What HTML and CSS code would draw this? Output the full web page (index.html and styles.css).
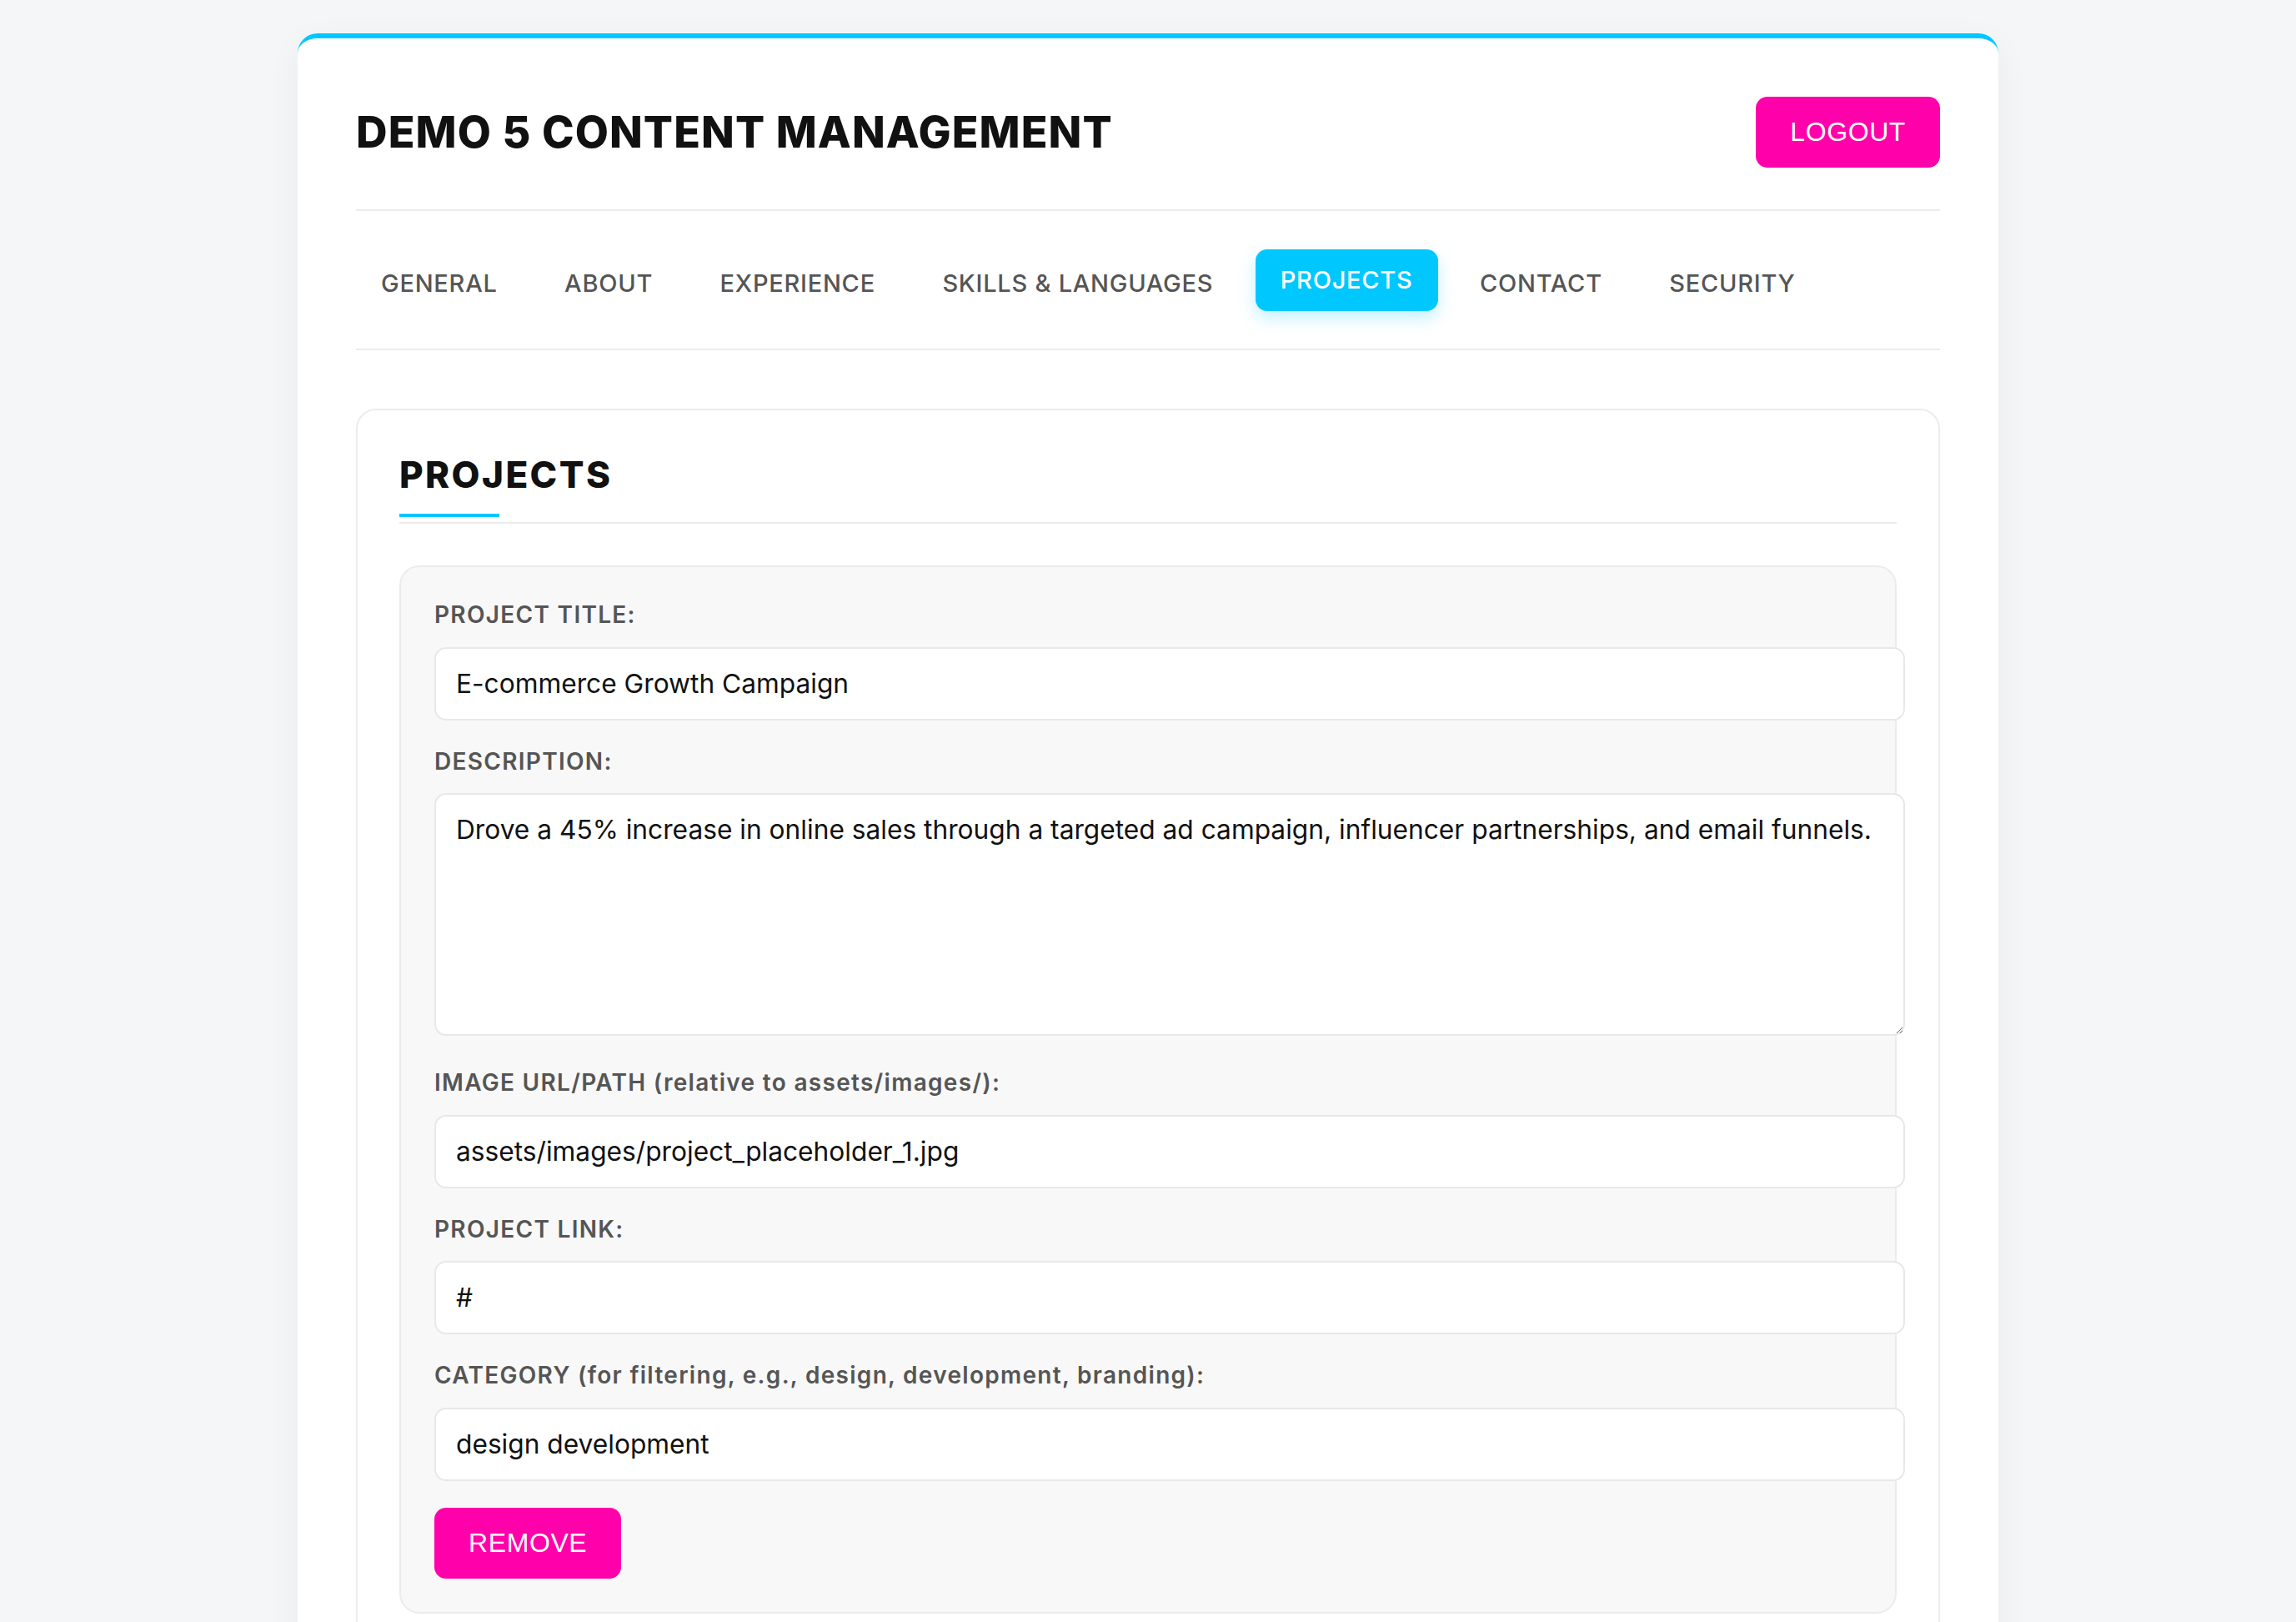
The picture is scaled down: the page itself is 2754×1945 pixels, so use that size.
FILE: index.html
```html
<!DOCTYPE html>
<html lang="en">
<head>
    <meta charset="UTF-8">
    <meta name="viewport" content="width=device-width, initial-scale=1.0">
    <title>Demo 5 Content Management</title>
    <link rel="stylesheet" href="styles.css">
</head>
<body>
    <div class="container">
        <div class="header">
            <h1>DEMO 5 CONTENT MANAGEMENT</h1>
            <button class="btn btn-pink">LOGOUT</button>
        </div>

        <nav class="tabs">
            <a href="#" class="tab">GENERAL</a>
            <a href="#" class="tab">ABOUT</a>
            <a href="#" class="tab">EXPERIENCE</a>
            <a href="#" class="tab">SKILLS &amp; LANGUAGES</a>
            <a href="#" class="tab active">PROJECTS</a>
            <a href="#" class="tab">CONTACT</a>
            <a href="#" class="tab">SECURITY</a>
        </nav>

        <div class="section">
            <h2>PROJECTS</h2>

            <div class="item">
                <label>PROJECT TITLE:</label>
                <input type="text" value="E-commerce Growth Campaign">

                <label>DESCRIPTION:</label>
                <textarea>Drove a 45% increase in online sales through a targeted ad campaign, influencer partnerships, and email funnels.</textarea>

                <label>IMAGE URL/PATH (relative to assets/images/):</label>
                <input type="text" value="assets/images/project_placeholder_1.jpg">

                <label>PROJECT LINK:</label>
                <input type="text" value="#">

                <label>CATEGORY (for filtering, e.g., design, development, branding):</label>
                <input type="text" value="design development">

                <button class="btn btn-pink">REMOVE</button>
            </div>

            <button class="btn btn-cyan">ADD PROJECT</button>
        </div>
    </div>
</body>
</html>
```

FILE: styles.css
```css
body {
    font-family: Inter, "Noto Sans", Arial, sans-serif;
    margin: 0;
    padding: 40px 0;
    background-color: #f5f6f8;
    color: #111;
}
.container {
    max-width: 1900px;
    margin: 0 auto;
    background-color: white;
    padding: 70px;
    border-top: 6px solid #00c8ff;
    border-radius: 24px;
    box-shadow: 0 10px 40px rgba(0,0,0,0.05);
}
.header {
    display: flex;
    justify-content: space-between;
    align-items: center;
    padding-bottom: 50px;
    border-bottom: 2px solid #ececec;
}
h1 {
    margin: 0;
    font-size: 52px;
    font-weight: 800;
    letter-spacing: 1.1px;
    color: #111;
}
.btn {
    font-family: "Liberation Sans", Arial, sans-serif;
    font-size: 32px;
    letter-spacing: 0.6px;
    line-height: 37px;
    padding: 24px 41px;
    border: none;
    border-radius: 14px;
    color: white;
    cursor: pointer;
}
.btn-pink {
    background-color: #ff00aa;
}
.btn-cyan {
    background-color: #00c8ff;
    margin-top: 40px;
}
.tabs {
    display: flex;
    gap: 20.5px;
    padding: 50px 0 41px;
    border-bottom: 2px solid #ececec;
}
.tab {
    font-size: 29px;
    font-weight: 500;
    letter-spacing: 0.75px;
    line-height: 36px;
    padding: 19px 30px;
    color: #555;
    text-decoration: none;
    border-radius: 14px;
}
.tab.active {
    background-color: #00c8ff;
    color: white;
    transform: translateY(-4px);
    box-shadow: 0 8px 20px rgba(0,200,255,0.25);
}
.section {
    margin-top: 70px;
    padding: 50px;
    border: 2px solid #ececec;
    border-radius: 24px;
}
h2 {
    position: relative;
    margin: 0 0 50px;
    padding-bottom: 30px;
    font-size: 44px;
    font-weight: 800;
    letter-spacing: 2.4px;
    border-bottom: 2px solid #ececec;
}
h2::after {
    content: "";
    position: absolute;
    left: 0;
    bottom: 6px;
    width: 120px;
    height: 4px;
    background-color: #00c8ff;
}
.item {
    padding: 40px;
    background-color: #f8f8f8;
    border: 2px solid #ececec;
    border-radius: 24px;
}
label {
    display: block;
    margin-bottom: 21.5px;
    font-size: 28px;
    font-weight: 600;
    letter-spacing: 1.3px;
    color: #555;
}
input, textarea {
    display: block;
    width: 100%;
    margin: 0 0 32px;
    padding: 22px 24px;
    font-family: inherit;
    font-size: 31.7px;
    line-height: 40px;
    color: #111;
    background-color: white;
    border: 2px solid #e8e8e8;
    border-radius: 14px;
}
textarea {
    min-height: 243px;
    margin-bottom: 39px;
    resize: vertical;
}
```
